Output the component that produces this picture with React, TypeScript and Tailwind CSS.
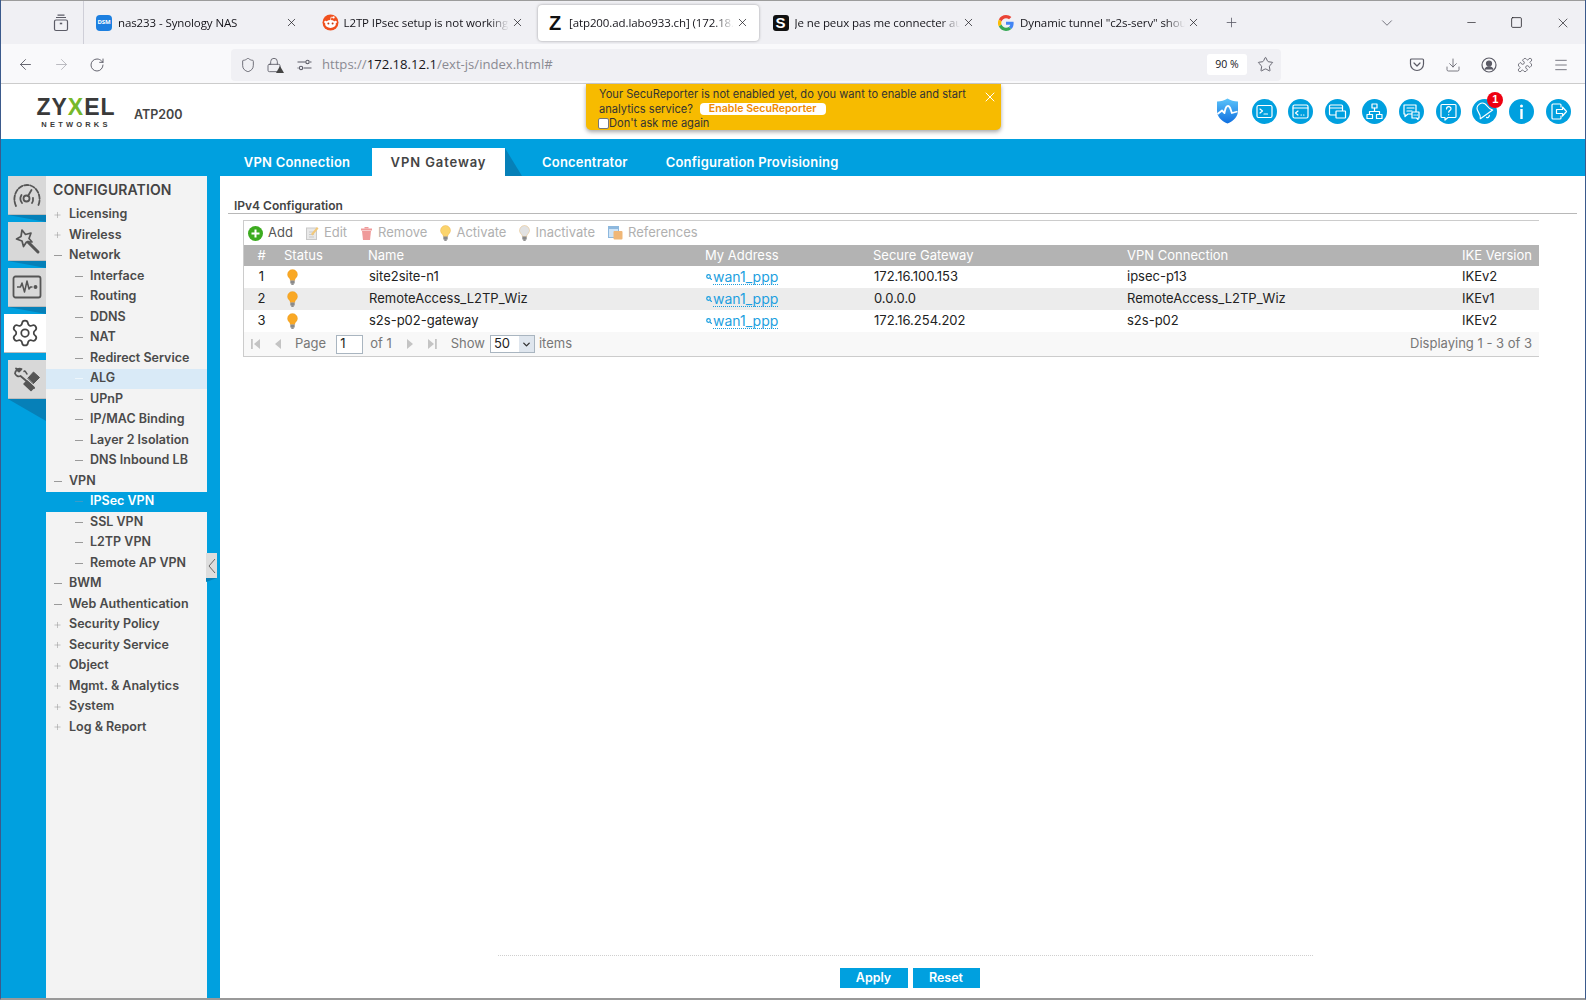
import { ArrowLeft, ArrowRight, ChevronDown, Download, Lock, Menu, Minus, Plus, Puzzle, RotateCw, Settings, Shield, Square, Star, X } from 'lucide-react';
import type { ReactNode } from 'react';

const BodyFont = 'font-["Inter",sans-serif]';

const browserTabs = [
  { title: 'nas233 - Synology NAS', icon: 'dsm' },
  { title: 'L2TP IPsec setup is not working', icon: 'reddit' },
  { title: '[atp200.ad.labo933.ch] (172.18.1', icon: 'z', active: true },
  { title: 'Je ne peux pas me connecter au', icon: 's' },
  { title: 'Dynamic tunnel "c2s-serv" shou', icon: 'google' },
];

const menuItems = [
  { label: 'Licensing', sign: '+', level: 1 },
  { label: 'Wireless', sign: '+', level: 1 },
  { label: 'Network', sign: '-', level: 1 },
  { label: 'Interface', sign: '-', level: 2 },
  { label: 'Routing', sign: '-', level: 2 },
  { label: 'DDNS', sign: '-', level: 2 },
  { label: 'NAT', sign: '-', level: 2 },
  { label: 'Redirect Service', sign: '-', level: 2 },
  { label: 'ALG', sign: '-', level: 2, state: 'hover' },
  { label: 'UPnP', sign: '-', level: 2 },
  { label: 'IP/MAC Binding', sign: '-', level: 2 },
  { label: 'Layer 2 Isolation', sign: '-', level: 2 },
  { label: 'DNS Inbound LB', sign: '-', level: 2 },
  { label: 'VPN', sign: '-', level: 1 },
  { label: 'IPSec VPN', sign: '-', level: 2, state: 'active' },
  { label: 'SSL VPN', sign: '-', level: 2 },
  { label: 'L2TP VPN', sign: '-', level: 2 },
  { label: 'Remote AP VPN', sign: '-', level: 2 },
  { label: 'BWM', sign: '-', level: 1 },
  { label: 'Web Authentication', sign: '-', level: 1 },
  { label: 'Security Policy', sign: '+', level: 1 },
  { label: 'Security Service', sign: '+', level: 1 },
  { label: 'Object', sign: '+', level: 1 },
  { label: 'Mgmt. & Analytics', sign: '+', level: 1 },
  { label: 'System', sign: '+', level: 1 },
  { label: 'Log & Report', sign: '+', level: 1 },
];

const gateways = [
  { id: 1, name: 'site2site-n1', gateway: '172.16.100.153', connection: 'ipsec-p13', ike: 'IKEv2' },
  { id: 2, name: 'RemoteAccess_L2TP_Wiz', gateway: '0.0.0.0', connection: 'RemoteAccess_L2TP_Wiz', ike: 'IKEv1' },
  { id: 3, name: 's2s-p02-gateway', gateway: '172.16.254.202', connection: 's2s-p02', ike: 'IKEv2' },
];

const Favicon = ({ icon }: { icon: string }) => {
  if (icon === 'dsm') {
    return <div className='flex h-4 w-4 items-center justify-center rounded-sm bg-[#1c7fe0] text-[6px] font-bold text-white'>DSM</div>;
  }
  if (icon === 'reddit') {
    return (
      <svg width='17' height='17' viewBox='0 0 17 17'>
        <circle cx='8.5' cy='8.5' r='8' fill='#f0501e' />
        <ellipse cx='8.5' cy='10' rx='5.4' ry='3.9' fill='#fff' />
        <circle cx='3.4' cy='8' r='1.2' fill='#fff' />
        <circle cx='13.6' cy='8' r='1.2' fill='#fff' />
        <circle cx='6.4' cy='9.4' r='1' fill='#c8390f' />
        <circle cx='10.6' cy='9.4' r='1' fill='#c8390f' />
        <circle cx='11.6' cy='3.4' r='1.1' fill='#fff' />
        <path d='M8.5 6 9 3.2l2.2.3' stroke='#fff' strokeWidth='.7' fill='none' />
      </svg>
    );
  }
  if (icon === 'z') {
    return <div className='flex h-4 w-4 items-center justify-center font-["Liberation_Sans",sans-serif] text-[20px] font-bold leading-none text-[#111]'>Z</div>;
  }
  if (icon === 's') {
    return <div className='flex h-4 w-4 items-center justify-center rounded-[3px] bg-[#111] font-["Liberation_Sans",sans-serif] text-[15px] font-bold leading-none text-white'>S</div>;
  }
  return (
    <svg width='16' height='16' viewBox='0 0 48 48'>
      <path fill='#EA4335' d='M24 9.5c3.5 0 6.7 1.2 9.2 3.6l6.9-6.9C35.9 2.4 30.5 0 24 0 14.6 0 6.5 5.4 2.6 13.2l8 6.2C12.5 13.7 17.8 9.5 24 9.5z' />
      <path fill='#4285F4' d='M46.9 24.5c0-1.6-.1-3.1-.4-4.5H24v9h12.9c-.6 3-2.2 5.5-4.7 7.2l7.7 6c4.4-4.1 7-10.200 7-17.700z' />
      <path fill='#FBBC05' d='M10.500 28.600a14.500 14.500 0 0 1 0-9.200l-8-6.200a24 24 0 0 0 0 21.600l8-6.200z' />
      <path fill='#34A853' d='M24 48c6.500 0 11.900-2.100 15.900-5.800l-7.700-6c-2.100 1.400-4.900 2.300-8.200 2.300-6.200 0-11.500-4.200-13.400-9.900l-8 6.200C6.500 42.600 14.600 48 24 48z' />
    </svg>
  );
};

const RoundIcon = ({ children, badge }: { children: ReactNode; badge?: boolean }) => (
  <div className='relative h-[25px] w-[25px] shrink-0 rounded-full bg-[#00a0df]'>
    <svg width='25' height='25' viewBox='0 0 25 25' fill='none' stroke='#fff' strokeWidth='1.2' strokeLinecap='round' strokeLinejoin='round'>
      {children}
    </svg>
    {badge && (
      <div className='absolute right-[-6px] top-[-7px] flex h-4 w-4 items-center justify-center rounded-full bg-[#ee0011] font-["Liberation_Sans",sans-serif] text-[11px] font-bold text-white'>1</div>
    )}
  </div>
);

const Bulb = ({ color = '#f9a825' }: { color?: string }) => (
  <svg width='11' height='16' viewBox='0 0 11 16'>
    <path d='M5.500.5a5 5 0 0 0-5 5c0 2 1.200 3 2.200 4.200.5.700.5 1.300.5 1.800h4.600c0-.5 0-1.100.5-1.800 1-1.200 2.200-2.200 2.200-4.200a5 5 0 0 0-5-5z' fill={color} stroke='#e08a00' strokeOpacity='.4' strokeWidth='.6' />
    <rect x='3.300' y='11.500' width='4.400' height='3' fill='#8a8a8a' />
    <rect x='4.300' y='14.500' width='2.400' height='1.200' fill='#666' />
  </svg>
);

const ToolButton = ({ icon, label, disabled }: { icon: ReactNode; label: string; disabled?: boolean }) => (
  <div className={`flex items-center gap-[5px] ${disabled ? 'text-[#b0b0b0]' : 'text-[#555]'}`}>
    {icon}
    <span>{label}</span>
  </div>
);

const SideButton = ({ children, active, tail = 'h-[7px]' }: { children: ReactNode; active?: boolean; tail?: string }) => (
  <div className='flex flex-col items-end'>
    <div className={`flex h-[39px] items-center justify-center border-b border-[#bdbdbd] ${active ? 'w-[42px] bg-white' : 'w-[38px] bg-[#d8d8d8]'}`}>
      {children}
    </div>
    <div className={`w-[38px] ${tail} bg-[#0680b8] [clip-path:polygon(0_0,100%_0,100%_100%)] ${active ? 'invisible' : ''}`} />
  </div>
);

const App = () => {
  return (
    <div className={`flex h-[1000px] w-[1586px] flex-col overflow-hidden border-x border-b-2 border-x-[#3b5a8c] border-b-[#999] bg-white ${BodyFont}`}>
      {/* Browser tabs */}
      <div className='flex h-[44px] shrink-0 items-center border-t border-[#9c9c9c] bg-[#f0f0f4] font-["Open_Sans",sans-serif] text-[11.500px] tracking-[-0.100px] text-[#15141a]'>
        <div className='flex h-[44px] w-[83px] shrink-0 items-center justify-end border-r border-[#cfcfd8] pr-[14px] text-[#5b5b66]'>
          <svg width='16' height='18' viewBox='0 0 16 18' fill='none' stroke='currentColor' strokeWidth='1.200'>
            <rect x='1.500' y='6' width='13' height='10.500' rx='1.500' />
            <path d='M3 3.500h10M4.500 1.200h7' />
            <path d='M6.800 9.500h2.400' strokeWidth='1.600' />
          </svg>
        </div>
        <div className='flex items-center gap-[4.500px] pl-[3px]'>
          {browserTabs.map((tab) => (
            <div
              key={tab.title}
              className={`flex h-[36px] w-[221px] shrink-0 items-center pl-[9px] pr-[10px] ${tab.active ? 'rounded-[4px] bg-white shadow-[0_0_3px_rgba(0,0,0,0.35)]' : ''}`}
            >
              <div className='flex w-[22px] shrink-0'>
                <Favicon icon={tab.icon} />
              </div>
              <div className='min-w-0 flex-1 whitespace-nowrap [mask-image:linear-gradient(to_right,black_88%,transparent)]'>{tab.title}</div>
              <X className='ml-[2px] h-[13px] w-[13px] shrink-0' strokeWidth={1.300} />
            </div>
          ))}
        </div>
        <Plus className='ml-[14px] h-[15px] w-[15px] text-[#5b5b66]' strokeWidth={1.300} />
        <ChevronDown className='ml-[139px] h-[18px] w-[18px] text-[#5b5b66]' strokeWidth={1.100} />
        <Minus className='ml-[69px] h-[13px] w-[13px]' strokeWidth={1.200} />
        <Square className='ml-[32px] h-[13px] w-[13px]' strokeWidth={1.400} />
        <X className='ml-[32px] h-[16px] w-[16px]' strokeWidth={1} />
      </div>

      {/* Browser toolbar */}
      <div className='flex h-[40px] shrink-0 items-center border-b border-[#cccccc] bg-[#f9f9fb] pt-[2px] text-[#5b5b66]'>
        <ArrowLeft className='ml-[16px] h-[17px] w-[17px]' strokeWidth={1.300} />
        <ArrowRight className='ml-[19px] h-[17px] w-[17px] text-[#b5b5bb]' strokeWidth={1.300} />
        <RotateCw className='ml-[19px] h-[16px] w-[16px]' strokeWidth={1.400} />
        <div className='ml-[126px] flex h-[32px] w-[1050px] items-center rounded-[4px] bg-[#f0f0f4]'>
          <Shield className='ml-[9px] h-[16px] w-[16px]' strokeWidth={1.300} />
          <div className='relative ml-[10px]'>
            <Lock className='h-[16px] w-[16px]' strokeWidth={1.300} />
            <div className='absolute bottom-0 right-[-2px] h-0 w-0 border-x-[4px] border-b-[7px] border-x-transparent border-b-[#444]' />
          </div>
          <svg className='ml-[15px]' width='15' height='12' viewBox='0 0 15 12' fill='none' stroke='currentColor' strokeWidth='1.100'>
            <circle cx='10.500' cy='3' r='1.700' />
            <circle cx='4' cy='9' r='1.700' />
            <path d='M.5 3h8M13 3h1.500M6.500 9h8M.5 9h1' />
          </svg>
          <div className='ml-[10px] font-["Open_Sans",sans-serif] text-[13.100px] text-[#8a8a92]'>
            https://<span className='text-[#15141a]'>172.18.12.1</span>/ext-js/index.html#
          </div>
          <div className='ml-auto flex h-[21px] w-[40px] items-center justify-center rounded-[3px] bg-white font-["Open_Sans",sans-serif] text-[10.500px] text-[#15141a]'>90 %</div>
          <Star className='ml-[10px] mr-[7px] h-[17px] w-[17px]' strokeWidth={1.300} />
        </div>
        <svg className='ml-[128px]' width='16' height='16' viewBox='0 0 16 16' fill='none' stroke='currentColor' strokeWidth='1.200' strokeLinejoin='round' strokeLinecap='round'>
          <path d='M2.500 2h11a1 1 0 0 1 1 1v4a6.500 6.500 0 0 1-13 0V3a1 1 0 0 1 1-1z' />
          <path d='m5 6 3 3 3-3' />
        </svg>
        <Download className='ml-[20px] h-[16px] w-[16px]' strokeWidth={1.200} />
        <svg className='ml-[20px]' width='16' height='16' viewBox='0 0 16 16' fill='none' stroke='currentColor' strokeWidth='1.200'>
          <circle cx='8' cy='8' r='7' />
          <circle cx='8' cy='6.500' r='2.500' fill='currentColor' />
          <path d='M3.800 12.500c1-2 2.500-2.700 4.200-2.700s3.200.7 4.200 2.700' fill='currentColor' />
        </svg>
        <Puzzle className='ml-[20px] h-[16px] w-[16px]' strokeWidth={1.200} />
        <Menu className='ml-[20px] h-[16px] w-[16px]' strokeWidth={1.200} />
      </div>

      {/* Zyxel header */}
      <div className='relative flex h-[55px] shrink-0 items-center bg-white'>
        <div className='ml-[34px] mt-[3px] flex w-[82px] flex-col items-center'>
          <div className='font-["Liberation_Sans",sans-serif] text-[23px] font-bold leading-[19px] tracking-[1px] text-[#3a3a3a]'>
            ZY<span className='text-[#76b82a]'>X</span>EL
          </div>
          <div className='mt-[4px] font-["Liberation_Sans",sans-serif] text-[7.500px] font-bold leading-[8px] tracking-[3.200px] text-[#3a3a3a]'>NETWORKS</div>
        </div>
        <div className='ml-[17px] mt-[8px] text-[12.500px] font-semibold text-[#444]'>ATP200</div>

        {/* SecuReporter notice */}
        <div className='absolute left-[585px] top-0 h-[46px] w-[415px] rounded-b-[5px] bg-[#f7bb00] pl-[13px] pt-[3px] text-[11.100px] leading-[14.500px] text-[#333] shadow-[0_2px_4px_rgba(0,0,0,0.35)]'>
          <div>Your SecuReporter is not enabled yet, do you want to enable and start</div>
          <div className='flex items-center'>
            analytics service?
            <span className='ml-[7px] rounded-[4px] bg-white px-[9px] text-[10.600px] font-semibold leading-[12px] text-[#f08a00]'>Enable SecuReporter</span>
          </div>
          <div className='ml-[-1px] flex items-center'>
            <span className='h-[11px] w-[11px] rounded-[2px] border border-[#777] bg-white' />
            Don't ask me again
          </div>
          <X className='absolute right-[3px] top-[5px] h-[16px] w-[16px] text-white' strokeWidth={1.500} />
        </div>

        {/* Tool icons */}
        <div className='absolute right-[14px] top-[14px] flex items-center gap-[11.800px]'>
          <svg width='25' height='26' viewBox='0 0 25 26'>
            <defs>
              <linearGradient id='shieldFill' x1='0' y1='0' x2='0' y2='1'>
                <stop offset='0' stopColor='#5cc4fa' />
                <stop offset='1' stopColor='#0f6fe0' />
              </linearGradient>
            </defs>
            <path d='M12.500.5c3 2 6.500 3 10.500 3v9c0 6-4 10.500-10.500 13C6 23 2 18.500 2 12.500v-9c4 0 7.500-1 10.500-3z' fill='url(#shieldFill)' />
            <path d='M2.500 16 7 12.500l2.500 2.500c.5-3 1-7 3.500-7s2.500 4 4 7l5.500-1.500' fill='none' stroke='#fff' strokeWidth='1.800' strokeLinejoin='round' />
          </svg>
          <RoundIcon>
            <rect x='5' y='6.500' width='15' height='12' rx='1.500' />
            <path d='m8 10 2.500 2L8 14M12 15h3.500' />
          </RoundIcon>
          <RoundIcon>
            <rect x='5' y='6' width='15' height='13' rx='1.500' />
            <path d='M5 9h15M10 12l-2.500 2 2.500 2M13 16h.5M15.500 16h.5' />
          </RoundIcon>
          <RoundIcon>
            <rect x='4.500' y='6' width='13' height='10' rx='1' />
            <path d='M4.500 9h13' />
            <rect x='11' y='12' width='9.500' height='7' rx='.5' fill='#00a0df' />
          </RoundIcon>
          <RoundIcon>
            <rect x='10' y='5' width='5' height='4' />
            <rect x='5' y='15.500' width='5.500' height='4' />
            <rect x='14.500' y='15.500' width='5.500' height='4' />
            <path d='M12.500 9v3.500M7.500 15.500v-3h10v3' />
          </RoundIcon>
          <RoundIcon>
            <path d='M5 6h12v9H9l-3 2.500V15H5z' />
            <path d='M8 9h7M8 12h5' />
            <path d='M13 13h7v6h-1v1.500L17.500 19H13z' fill='#00a0df' />
            <path d='M15 16h.3M16.700 16h.3M18.300 16h.3' />
          </RoundIcon>
          <RoundIcon>
            <path d='M6 5.500h13a1 1 0 0 1 1 1v11a1 1 0 0 1-1 1h-7l-3 2.500v-2.500H6a1 1 0 0 1-1-1v-11a1 1 0 0 1 1-1z' />
            <path d='M10.500 10c0-3 4.500-3 4.500-.3 0 1.800-2.300 1.800-2.300 3.500M12.700 15.500v.3' />
          </RoundIcon>
          <RoundIcon badge>
            <g transform='rotate(-35 12.500 12.500)'>
              <path d='M12.500 3.500c-3.800 0-5.300 2.800-5.300 6 0 3.300-1 5-2.200 6.500h15c-1.200-1.500-2.200-3.200-2.200-6.500 0-3.200-1.500-6-5.300-6z' />
              <path d='M10.800 18.500c.6 1.200 2.800 1.200 3.400 0' />
            </g>
          </RoundIcon>
          <RoundIcon>
            <circle cx='12.500' cy='7' r='1.500' fill='#fff' stroke='none' />
            <rect x='11.300' y='10' width='2.400' height='10' fill='#fff' stroke='none' />
          </RoundIcon>
          <RoundIcon>
            <path d='M15 8V6a1 1 0 0 0-1-1H7a1 1 0 0 0-1 1v13a1 1 0 0 0 1 1h7a1 1 0 0 0 1-1v-2' />
            <path d='M10.500 10.500h6V8l4 4.500-4 4.500v-2.500h-6z' />
          </RoundIcon>
        </div>
      </div>

      {/* Main area */}
      <div className='relative flex min-h-0 flex-1 bg-[#00a0df]'>
        {/* Icon rail */}
        <div className='flex w-[45px] shrink-0 flex-col pt-[37px]'>
          <SideButton>
            <svg width='30' height='25' viewBox='0 0 30 25' fill='none' stroke='#555' strokeWidth='1.800' strokeLinecap='round'>
              <path d='M4 23C-.5 14 5 2 15 2s15.500 12 11 21' strokeDasharray='4.500 1.800' />
              <path d='M10 20a7 7 0 0 1-.5-8' />
              <circle cx='14.500' cy='15.500' r='3' />
              <path d='M16 13 19.500 7M20 20c1-1.500 1.300-3 1-5' />
            </svg>
          </SideButton>
          <SideButton>
            <svg width='28' height='28' viewBox='0 0 28 28' fill='none' stroke='#555' strokeWidth='1.700' strokeLinejoin='round' strokeLinecap='round'>
              <path d='m9 3 3.500 4.500L18 6l-2 5.500 3 3.500-5.500 0-3 4.500-1.500-5.500L3.500 12 8 9.500z' />
              <path d='m15 15 10 10' strokeWidth='3' />
            </svg>
          </SideButton>
          <SideButton>
            <svg width='30' height='24' viewBox='0 0 30 24' fill='none' stroke='#555' strokeWidth='1.500' strokeLinejoin='round'>
              <rect x='1.500' y='1.500' width='27' height='21' rx='2' strokeWidth='1.800' />
              <path d='M5 12h3.500l1.500-4 2.500 9 2.500-11 2 8 1.500-2h2' />
              <circle cx='23.500' cy='12' r='1.200' fill='#555' />
            </svg>
          </SideButton>
          <SideButton active>
            <Settings className='h-[30px] w-[30px] text-[#444]' strokeWidth={1.400} />
          </SideButton>
          <SideButton tail='h-[22px]'>
            <svg width='28' height='28' viewBox='0 0 28 28' fill='none' stroke='#555' strokeLinejoin='round' strokeLinecap='round'>
              <path d='M3 3.500 6 6.500 8.500 4A5 5 0 0 0 2 8.500c1 2.500 3.500 3.500 5.500 2.500L17 19l4 4' strokeWidth='1.800' />
              <path d='M11 6.500C12 5 12.500 7 14 9' strokeWidth='1.500' />
              <path d='m11 19 3-3 7 6.500-3 3z' fill='#555' strokeWidth='1.500' />
              <path d='m15 13 5.500-6 6 5.500-6 6z' fill='#555' strokeWidth='1' />
            </svg>
          </SideButton>
        </div>

        {/* Menu */}
        <div className='relative mt-[37px] w-[161px] shrink-0 bg-[#f3f3f3]'>
          <div className='flex h-[28.500px] items-center pb-[2px] pl-[7px] text-[14px] font-semibold tracking-[0.100px] text-[#444]'>CONFIGURATION</div>
          {menuItems.map((item) => (
            <div
              key={item.label}
              className={`flex h-[20.500px] items-center text-[12.500px] font-semibold ${item.level === 1 ? 'pl-[7px]' : 'pl-[28px]'} ${item.state === 'active' ? 'bg-[#00a0df] text-white' : item.state === 'hover' ? 'bg-[#d9eaf7] text-[#4a4a4a]' : 'text-[#4a4a4a]'}`}
            >
              <span className='mr-[7px] flex w-[9px] shrink-0 justify-center'>
                {item.sign === '+' ? (
                  <Plus className='h-[10px] w-[10px] text-[#9a9a9a]' strokeWidth={1.500} />
                ) : (
                  <span className={`h-px w-[8px] ${item.state === 'active' ? 'bg-[#3a9cc8]' : item.state === 'hover' ? 'bg-[#eef6fb]' : 'bg-[#9a9a9a]'}`} />
                )}
              </span>
              {item.label}
            </div>
          ))}
        </div>

        {/* Collapse handle */}
        <div className='absolute left-[205px] top-[414px] flex flex-col'>
          <div className='flex h-[25px] w-[11px] items-center justify-center bg-[#dddddd]'>
            <svg width='8' height='16' viewBox='0 0 8 16' fill='none' stroke='#666' strokeWidth='1'>
              <path d='M7 1 1 8l6 7' />
            </svg>
          </div>
          <div className='h-[4px] w-[11px] bg-[#0680b8] [clip-path:polygon(0_0,100%_0,0_100%)]' />
        </div>

        {/* Content */}
        <div className='mt-[37px] ml-[13px] flex min-w-0 flex-1 flex-col'>
          <div className='absolute left-[225px] top-[9px] flex h-[28px] items-stretch text-[13px] font-semibold tracking-[0.200px] text-white'>
            <div className='flex w-[146px] items-center justify-center pr-[4px] pt-[2px]'>VPN Connection</div>
            <div className='flex w-[133px] items-center justify-center bg-white pt-[2px] tracking-[0.900px] text-[#444]'>VPN Gateway</div>
            <div className='h-[28px] w-[17px] bg-[#0680b8] [clip-path:polygon(0_0,100%_100%,0_100%)]' />
            <div className='ml-[20px] flex items-center pt-[2px]'>Concentrator</div>
            <div className='ml-[38px] flex items-center pt-[2px]'>Configuration Provisioning</div>
          </div>

          <div className='flex min-h-0 flex-1 flex-col bg-white pl-[8px] pr-[8px]'>
            <div className='flex h-[38px] items-end border-b border-[#b8b8b8] pl-[6px] text-[12px] font-semibold leading-[14px] text-[#444]'>IPv4 Configuration</div>

            {/* Gateway grid */}
            <div className='ml-[15px] mr-[38px] mt-[6px] border-x-0 border-l border-t border-[#cccccc] text-[13px]'>
              <div className='flex h-[24px] items-center gap-[13px] pl-[4px] text-[#555]'>
                <ToolButton
                  label='Add'
                  icon={
                    <svg width='15' height='15' viewBox='0 0 15 15'>
                      <circle cx='7.500' cy='7.500' r='7.500' fill='#3cab1f' />
                      <path d='M7.500 3.500v8M3.500 7.500h8' stroke='#fff' strokeWidth='2' />
                    </svg>
                  }
                />
                <ToolButton
                  disabled
                  label='Edit'
                  icon={
                    <svg width='13' height='14' viewBox='0 0 13 14'>
                      <rect x='.5' y='2' width='10' height='11.500' fill='#e8e8e8' stroke='#c9c9c9' />
                      <path d='M3 6h5M3 8.500h5M3 11h5' stroke='#c9c9c9' />
                      <path d='m5 8 6-7 1.500 1.500-6 7z' fill='#f2c879' />
                    </svg>
                  }
                />
                <ToolButton
                  disabled
                  label='Remove'
                  icon={
                    <svg width='13' height='14' viewBox='0 0 13 14'>
                      <path d='M1 2.500h11v2H1z' fill='#ef9a9a' />
                      <path d='M2 5h9l-1 9H3z' fill='#ef9a9a' />
                      <path d='M4.500 1h4v1.500h-4z' fill='#ef9a9a' />
                    </svg>
                  }
                />
                <ToolButton disabled label='Activate' icon={<Bulb color='#fbd46d' />} />
                <ToolButton disabled label='Inactivate' icon={<Bulb color='#e2e2e2' />} />
                <ToolButton
                  disabled
                  label='References'
                  icon={
                    <svg width='15' height='14' viewBox='0 0 15 14'>
                      <rect x='.5' y='.5' width='10' height='11' fill='#cfe4f7' stroke='#8db8de' />
                      <rect x='.5' y='.5' width='10' height='2.500' fill='#8db8de' />
                      <rect x='5.500' y='5' width='9' height='8.500' rx='1' fill='#f0b777' />
                    </svg>
                  }
                />
              </div>

              <div className='grid h-[21px] grid-cols-[40px_84px_337px_168px_254px_335px_1fr] items-center bg-[#b3b3b3] text-white'>
                <div className='w-[35px] text-center'>#</div>
                <div>Status</div>
                <div>Name</div>
                <div>My Address</div>
                <div>Secure Gateway</div>
                <div>VPN Connection</div>
                <div>IKE Version</div>
              </div>

              {gateways.map((row, index) => (
                <div
                  key={row.id}
                  className={`grid h-[22px] grid-cols-[40px_84px_337px_168px_254px_335px_1fr] items-center text-[#222] ${index === 1 ? 'bg-[#ececec]' : 'bg-white'}`}
                >
                  <div className='w-[35px] text-center'>{row.id}</div>
                  <div className='pl-[3px]'>
                    <Bulb />
                  </div>
                  <div className='pl-[1px]'>{row.name}</div>
                  <div className='flex items-center pl-[1px] text-[14px] text-[#1c9fe0]'>
                    <svg className='mr-[1px]' width='6' height='6' viewBox='0 0 6 6' fill='none' stroke='#1c9fe0' strokeWidth='1.200'>
                      <circle cx='2.500' cy='2.500' r='1.800' />
                      <path d='M4 4l2 2' />
                    </svg>
                    <span className='border-b border-dotted border-[#1c9fe0] leading-[15px]'>wan1_ppp</span>
                  </div>
                  <div className='pl-[1px]'>{row.gateway}</div>
                  <div>{row.connection}</div>
                  <div>{row.ike}</div>
                </div>
              ))}

              <div className='flex h-[25px] items-center border-b border-[#cccccc] bg-[#f8f8f8] pl-[6px] pr-[7px] text-[#777]'>
                <svg width='12' height='12' viewBox='0 0 12 12' fill='#c4c4c4'>
                  <rect x='1' y='1' width='1.800' height='10' />
                  <path d='M10 1v10L4 6z' />
                </svg>
                <svg className='ml-[12px]' width='8' height='12' viewBox='0 0 8 12' fill='#c4c4c4'>
                  <path d='M7 1v10L1 6z' />
                </svg>
                <span className='ml-[13px]'>Page</span>
                <div className='ml-[10px] flex h-[19px] w-[27px] items-center border border-[#a9b5c0] bg-white pl-[3px] text-[#222]'>1</div>
                <span className='ml-[7px]'>of 1</span>
                <svg className='ml-[14px]' width='8' height='12' viewBox='0 0 8 12' fill='#c4c4c4'>
                  <path d='M1 1v10l6-5z' />
                </svg>
                <svg className='ml-[12px]' width='12' height='12' viewBox='0 0 12 12' fill='#c4c4c4'>
                  <path d='M2 1v10l6-5z' />
                  <rect x='9' y='1' width='1.800' height='10' />
                </svg>
                <span className='ml-[13px]'>Show</span>
                <div className='ml-[5px] flex h-[18px] w-[45px] items-center border border-[#a9b5c0] bg-white pl-[3px] text-[#222]'>
                  <span className='flex-1'>50</span>
                  <div className='flex h-full w-[15px] items-center justify-center bg-[#dfe6ee]'>
                    <ChevronDown className='h-[11px] w-[11px] text-[#333]' strokeWidth={3} />
                  </div>
                </div>
                <span className='ml-[4px]'>items</span>
                <span className='ml-auto'>Displaying 1 - 3 of 3</span>
              </div>
            </div>

            {/* Form actions */}
            <div className='mt-auto flex h-[43px] flex-col items-center'>
              <div className='ml-[6px] h-px w-[815px] border-t border-dotted border-[#cfcfcf]' />
              <div className='ml-[14px] mt-[12px] flex gap-[5px] text-[12.500px] font-semibold text-white'>
                <div className='flex h-[20px] w-[68px] items-center justify-center bg-[#00a0df]'>Apply</div>
                <div className='flex h-[20px] w-[67px] items-center justify-center bg-[#00a0df]'>Reset</div>
              </div>
            </div>
          </div>
        </div>
      </div>
    </div>
  );
};

export default App;
